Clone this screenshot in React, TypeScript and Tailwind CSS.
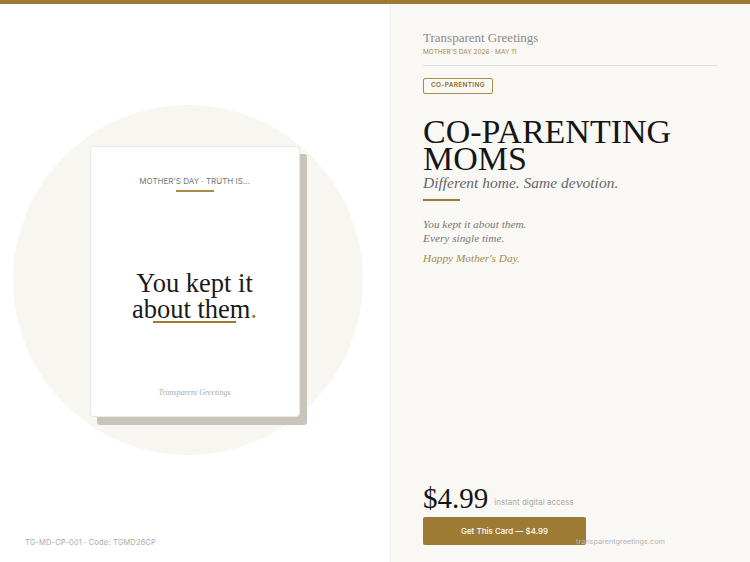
import React from "react";

const serif = { fontFamily: '"Liberation Serif", "DejaVu Serif", serif' };
const sans = { fontFamily: 'Inter, "Open Sans", sans-serif' };

export default function App() {
  return (
    <div className="w-[750px] h-[562px] flex flex-col bg-white overflow-hidden">
      <div className="h-[4px] bg-[#9b7a36]" />
      <div className="flex flex-1">
        {/* Left */}
        <div className="relative w-[390px] flex items-center justify-center">
          <div className="absolute left-[13px] top-[101px] w-[350px] h-[350px] rounded-full bg-[#f7f6f1]" />
          <div className="relative w-[210px] h-[271px] -mt-[3px] -ml-[1px]">
            <div className="absolute left-[7px] top-[8px] w-[210px] h-[271px] rounded-[3px] bg-[#c9c4ba]" />
            <div className="absolute inset-0 rounded-[4px] bg-white border border-[#ece9e2] flex flex-col items-center">
              <div className="mt-[28px] text-[8px] text-[#777]" style={sans}>
                MOTHER'S DAY · TRUTH IS...
              </div>
              <div className="mt-[3px] w-[38px] h-[2px] bg-[#a88a4a]" />
              <div className="mt-[78px] text-center text-[26.5px] leading-[26px] text-[#1a1a1a]" style={serif}>
                <div>You kept it</div>
                <div>
                  about them<span className="text-[#9b7a36]">.</span>
                </div>
              </div>
              <div className="-mt-[1px] w-[83px] h-[2px] bg-[#9b7a36]" />
              <div className="mt-auto mb-[17px] italic text-[8px] text-[#aaa]" style={serif}>
                Transparent Greetings
              </div>
            </div>
          </div>
          <div className="absolute left-[25px] bottom-[14px] text-[7.5px] tracking-[0.15px] text-[#aaa]" style={sans}>
            TG-MD-CP-001 · Code: TGMD26CP
          </div>
        </div>
        {/* Right */}
        <div className="relative flex-1 bg-[#f9f8f5] border-l border-[#eeebe4] pl-[32px] pr-[32px] pt-[25px] pb-[17px] flex flex-col">
          <div className="text-[13px] leading-[17px] text-[#8a8a8a]" style={serif}>
            Transparent Greetings
          </div>
          <div className="mt-[2px] text-[6.5px] text-[#a8894a]" style={sans}>
            MOTHER'S DAY 2026 · MAY 11
          </div>
          <div className="mt-[7px] h-[1px] bg-[#e4e1da]" />
          <div className="mt-[12px] self-start border border-[#a88a4a] rounded-[2px] px-[7px] py-[2px] text-[6.5px] font-semibold tracking-[0.3px] text-[#8a6d32]" style={sans}>
            CO-PARENTING
          </div>
          <div className="mt-[24px] text-[34px] leading-[27px] text-[#151515]" style={serif}>
            <div>CO-PARENTING</div>
            <div>MOMS</div>
          </div>
          <div className="mt-[2px] italic text-[15.5px] leading-[18px] text-[#666]" style={serif}>
            Different home. Same devotion.
          </div>
          <div className="mt-[7px] w-[37px] h-[2px] bg-[#9b7a36]" />
          <div className="mt-[16px] italic text-[11.3px] leading-[14px] text-[#777]" style={serif}>
            <div>You kept it about them.</div>
            <div>Every single time.</div>
          </div>
          <div className="mt-[6px] italic text-[11.3px] leading-[14px] text-[#a8894a]" style={serif}>
            Happy Mother's Day.
          </div>
          <div className="mt-auto flex items-end gap-[6px]">
            <div className="text-[29px] leading-[30px] text-[#151515]" style={serif}>$4.99</div>
            <div className="mb-[5px] text-[8px] text-[#aaa]" style={sans}>instant digital access</div>
          </div>
          <div className="mt-[4px] w-[163px] h-[28px] rounded-[2px] bg-[#9d7b35] flex items-center justify-center text-[8px] font-medium text-white" style={sans}>
            Get This Card — $4.99
          </div>
          <div className="absolute left-[185px] bottom-[14px] text-[7.3px] text-[#b5b5b5]" style={sans}>
            transparentgreetings.com
          </div>
        </div>
      </div>
    </div>
  );
}
